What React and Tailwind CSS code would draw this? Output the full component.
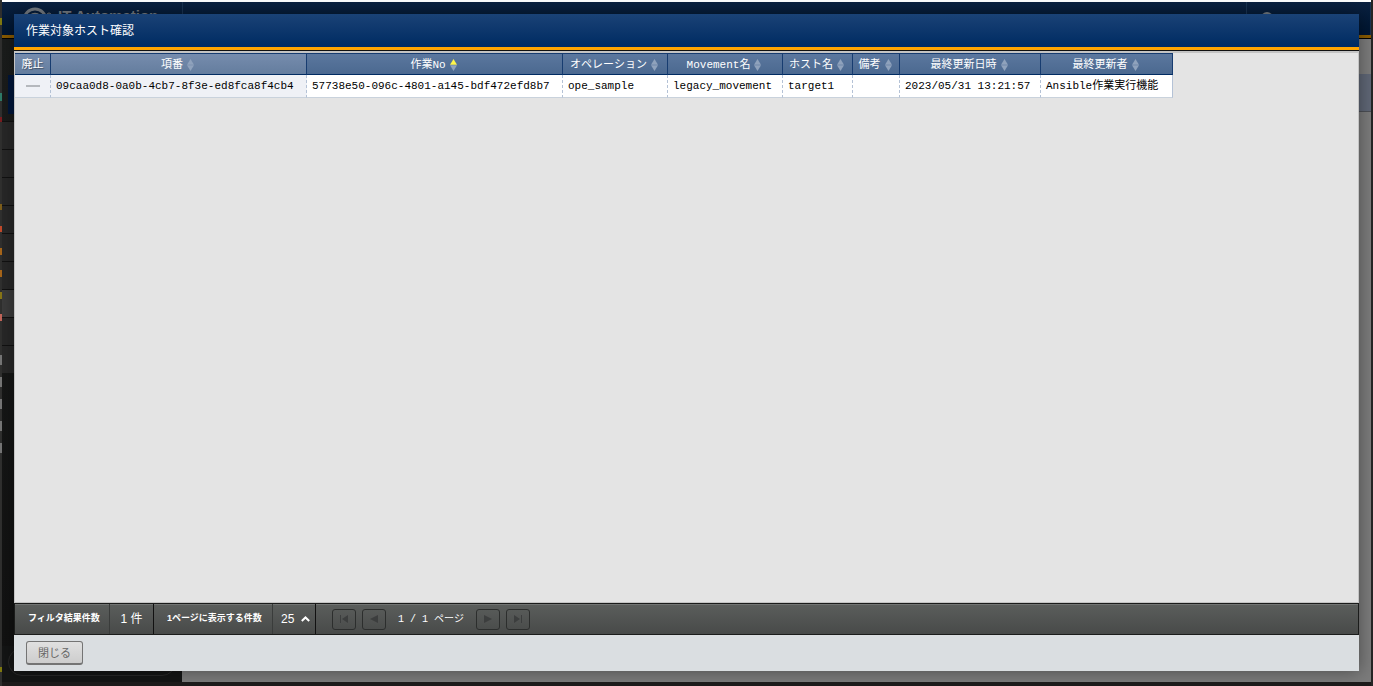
import React from "react";

const columns = [
  { label: "廃止", width: "w-9", light: true, sortable: false },
  { label: "項番", width: "w-[256px]", light: true, sortable: true },
  { label: "作業No", width: "w-[256px]", sortable: true, active: true },
  { label: "オペレーション", width: "w-[105px]", sortable: true },
  { label: "Movement名", width: "w-[115px]", sortable: true },
  { label: "ホスト名", width: "w-[70px]", sortable: true },
  { label: "備考", width: "w-[47px]", sortable: true },
  { label: "最終更新日時", width: "w-[141px]", sortable: true },
  { label: "最終更新者", width: "w-[132px]", sortable: true },
];

const row = [
  "09caa0d8-0a0b-4cb7-8f3e-ed8fca8f4cb4",
  "57738e50-096c-4801-a145-bdf472efd8b7",
  "ope_sample",
  "legacy_movement",
  "target1",
  "",
  "2023/05/31 13:21:57",
  "Ansible作業実行機能",
];

function SortMark({ active }) {
  return (
    <svg width="7" height="12" viewBox="0 0 7 12" className="shrink-0" aria-hidden="true">
      <path d="M3.5 0 L7 5.7 H0 Z" fill={active ? "#fff64a" : "#8fa2bc"} />
      <path d="M3.5 12 L7 6.3 H0 Z" fill="#8fa2bc" />
    </svg>
  );
}

function PageButton({ label, children }) {
  return (
    <button
      type="button"
      disabled
      aria-label={label}
      className="flex h-[21px] w-6 items-center justify-center rounded-[3px] border border-[#2c2e2d] text-[#3c3e3e]"
    >
      <svg width="10" height="10" viewBox="0 0 10 10" fill="currentColor" aria-hidden="true">
        {children}
      </svg>
    </button>
  );
}

function Backdrop() {
  return (
    <div className="flex min-h-screen bg-[#1d1b1b]" aria-hidden="true">
      <div className="flex w-[2px] shrink-0 flex-col bg-[#30302f]">
        <div className="mt-[18px] h-[7px] bg-[#807a10]" />
        <div className="mt-[68px] h-[8px] bg-[#2f7c69]" />
        <div className="mt-[16px] h-[5px] bg-[#7c1d20]" />
        <div className="mt-[82px] h-[6px] bg-[#80601b]" />
        <div className="mt-[16px] h-[6px] bg-[#c34b2c]" />
        <div className="mt-[16px] h-[7px] bg-[#a9671a]" />
        <div className="mt-[15px] h-[7px] bg-[#a9671a]" />
        <div className="mt-[15px] h-[7px] bg-[#8a7717]" />
        <div className="mt-[15px] h-[7px] bg-[#c4665b]" />
        {[0, 1, 2, 3, 4].map((i) => (
          <div key={i} className={i === 0 ? "mt-[34px] h-[10px] bg-[#777]" : "mt-[12px] h-[10px] bg-[#777]"} />
        ))}
        <div className="mt-[214px] h-[5px] bg-[#807a10]" />
      </div>
      <div className="flex min-w-0 grow flex-col border-b-4 border-[#1d1b1b]">
        <div className="h-[2px] shrink-0 bg-white" />
        <div className="flex h-[33px] shrink-0 justify-between overflow-hidden bg-linear-to-b from-[#0b2140] to-[#001531]">
          <div className="flex w-[181px] gap-1 border-r border-[#1a3352] pt-1 pl-5">
            <svg width="32" height="30" viewBox="0 0 32 30" fill="none" stroke="#777d84" className="shrink-0">
              <circle cx="13" cy="14" r="11" strokeWidth="3" />
              <circle cx="13" cy="14" r="6" strokeWidth="2.5" />
              <circle cx="27" cy="9" r="2" strokeWidth="1" />
            </svg>
            <div className="font-['Liberation_Sans'] text-[15px] leading-5 font-bold whitespace-nowrap text-[#777d84]">
              IT Automation
            </div>
          </div>
          <div className="flex w-[125px] border-r border-l border-[#1a3352] pt-[10px] pl-[14px]">
            <div className="h-3 w-3 rounded-full bg-[#777d84]" />
          </div>
        </div>
        <div className="h-1 shrink-0 border-b border-black bg-[#8a5b00]" />
        <div className="flex grow">
          <div className="flex w-[180px] shrink-0 flex-col bg-linear-to-b from-[#1b1d1c] to-[#111] pt-[36px]">
            <div className="ml-[6px] h-[39px] bg-[#00163a]" />
            <div className="mt-[7px]">
              {[0, 1, 2, 3, 4, 5, 6, 7, 8].map((i) => (
                <div
                  key={i}
                  className={
                    i === 6
                      ? "h-[28px] border-t border-[#111] bg-[#3c3c3c]"
                      : "h-[28px] border-t border-[#111] bg-[#282828]"
                  }
                />
              ))}
            </div>
            <div className="mt-auto h-9 bg-[#141515] px-1.5 pt-0.5">
              <div className="h-7 rounded-full border border-[#282828]" />
            </div>
          </div>
          <div className="grow bg-[#7b7b7b] pt-[35px]">
            <div className="h-[38px] border-b border-[#4c4f55] bg-[#5f6675]" />
          </div>
        </div>
      </div>
      <div className="w-[2px] shrink-0 bg-[#252525]" />
    </div>
  );
}

export default function App() {
  return (
    <div className="relative font-['Liberation_Sans','Noto_Sans_CJK_JP',sans-serif]">
      <Backdrop />
      <div
        role="dialog"
        aria-labelledby="dialog-title"
        className="absolute inset-x-[14px] top-[14px] bottom-[15px] flex flex-col bg-[#dadee1] shadow-[0_0_16px_rgba(0,0,0,0.4)]"
      >
        <header className="flex h-[37px] shrink-0 items-center border-b border-[#111] bg-[#ffa500] pb-[3px]">
          <div className="flex h-full grow items-center bg-linear-to-b from-[#1a4276] to-[#002b62] px-3">
            <h1 id="dialog-title" className="text-[12px] leading-4 text-white">
              作業対象ホスト確認
            </h1>
          </div>
        </header>

        <main className="min-h-0 grow overflow-auto border border-t-2 border-[#c4c4c4] bg-[#e4e4e4]">
          <table className="w-[1158px] table-fixed border-separate border-spacing-0 font-['Liberation_Mono','Noto_Sans_CJK_JP',monospace] text-[11px] leading-4 whitespace-nowrap">
            <thead>
              <tr>
                {columns.map((c) => (
                  <th
                    key={c.label}
                    scope="col"
                    className={`${c.width} h-[22px] border-t border-r border-b border-t-[#173c70] border-r-[#173c70] border-b-[#002b62] bg-linear-to-b px-0 pt-0.5 pb-0 font-normal text-white text-shadow-[1px_1px_1px_rgba(0,0,0,0.4)] ${
                      c.light ? "from-[#768cad] to-[#647d9e]" : "from-[#5b779e] to-[#4b6990]"
                    }`}
                  >
                    {c.sortable ? (
                      <button type="button" className="flex w-full items-center justify-center gap-1 pr-0.5">
                        <span>{c.label}</span>
                        <SortMark active={c.active} />
                      </button>
                    ) : (
                      c.label
                    )}
                  </th>
                ))}
              </tr>
            </thead>
            <tbody>
              <tr className="text-black">
                <td className="h-[23px] border-r border-b border-r-[#b4c2d6] border-b-[#c9d2dc] bg-[#eff1f6] p-0 [border-right-style:dashed]">
                  <div className="mx-auto h-[2px] w-[14px] bg-[#b5b8bd]" />
                </td>
                {row.map((value, i) => (
                  <td
                    key={i}
                    className={`h-[23px] border-r border-b border-r-[#b4c2d6] border-b-[#c9d2dc] py-0 pr-0 pl-[5px] ${
                      i === 0 ? "bg-[#eff1f6]" : "bg-white"
                    } ${i === row.length - 1 ? "" : "[border-right-style:dashed]"}`}
                  >
                    {value}
                  </td>
                ))}
              </tr>
            </tbody>
          </table>
        </main>

        <div className="flex h-8 shrink-0 border border-[#1b1c1b] bg-linear-to-b from-[#5b5e5c] to-[#484a49] text-white shadow-[inset_0_1px_0_#727473]">
          <div className="flex w-[95px] items-center border-r border-[#3a3c3b] pl-[13px] text-[9px] font-bold">
            フィルタ結果件数
          </div>
          <div className="flex w-11 items-center justify-center border-r border-[#111] text-[12px]">1 件</div>
          <label
            htmlFor="page-size"
            className="flex w-[119px] items-center border-r border-[#3a3c3b] pl-[13px] text-[9px] font-bold"
          >
            1ページに表示する件数
          </label>
          <div className="flex w-[43px] items-center border-r border-[#111] pl-2">
            <select id="page-size" className="w-5 appearance-none bg-transparent text-[12px] text-white" defaultValue="25">
              <option value="25">25</option>
            </select>
            <svg width="9" height="6" viewBox="0 0 9 6" fill="none" stroke="#fff" strokeWidth="2" aria-hidden="true">
              <path d="M0.8 5 L4.5 1.5 L8.2 5" />
            </svg>
          </div>
          <nav className="flex items-center gap-1.5 pl-4" aria-label="ページ">
            <PageButton label="最初">
              <path d="M1 1h1v8H1zM9 1v8L3 5z" />
            </PageButton>
            <PageButton label="前">
              <path d="M9 1v8L1 5z" />
            </PageButton>
            <div className="w-[78px] text-center font-['Liberation_Mono','Noto_Sans_CJK_JP',monospace] text-[10px] whitespace-nowrap">
              1 / 1 ページ
            </div>
            <PageButton label="次">
              <path d="M1 1v8l8-4z" />
            </PageButton>
            <PageButton label="最後">
              <path d="M1 1v8l6-4zM8 1h1v8H8z" />
            </PageButton>
          </nav>
        </div>

        <footer className="flex h-9 shrink-0 items-center px-3">
          <button
            type="button"
            className="h-6 w-[57px] rounded-[3px] border border-b-2 border-[#747474] bg-linear-to-b from-[#e0e0e0] to-[#cdcdcd] text-[11px] leading-4 text-[#666]"
          >
            閉じる
          </button>
        </footer>
      </div>
    </div>
  );
}
